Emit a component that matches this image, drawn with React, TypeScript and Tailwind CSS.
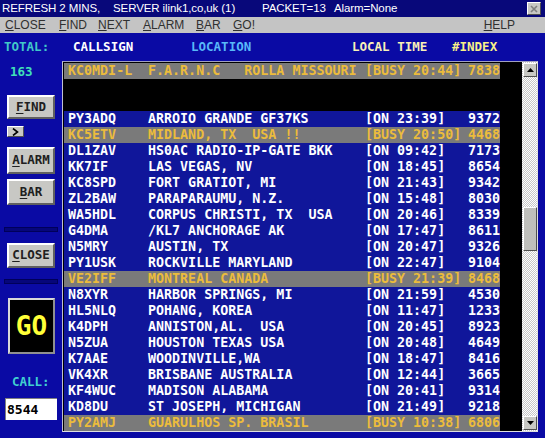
const rows: [string, string, string, string, string][] = [
  ["KC0MDI-L", "F.A.R.N.C   ROLLA MISSOURI", "[BUSY 20:44]", "7838", "busy"],
  ["", "", "", "", "empty"],
  ["", "", "", "", "empty"],
  ["PY3ADQ", "ARROIO GRANDE GF37KS", "[ON 23:39]", "9372", "on"],
  ["KC5ETV", "MIDLAND, TX  USA !!", "[BUSY 20:50]", "4468", "busy"],
  ["DL1ZAV", "HS0AC RADIO-IP-GATE BKK", "[ON 09:42]", "7173", "on"],
  ["KK7IF", "LAS VEGAS, NV", "[ON 18:45]", "8654", "on"],
  ["KC8SPD", "FORT GRATIOT, MI", "[ON 21:43]", "9342", "on"],
  ["ZL2BAW", "PARAPARAUMU, N.Z.", "[ON 15:48]", "8030", "on"],
  ["WA5HDL", "CORPUS CHRISTI, TX  USA", "[ON 20:46]", "8339", "on"],
  ["G4DMA", "/KL7 ANCHORAGE AK", "[ON 17:47]", "8611", "on"],
  ["N5MRY", "AUSTIN, TX", "[ON 20:47]", "9326", "on"],
  ["PY1USK", "ROCKVILLE MARYLAND", "[ON 22:47]", "9104", "on"],
  ["VE2IFF", "MONTREAL CANADA", "[BUSY 21:39]", "8468", "busy"],
  ["N8XYR", "HARBOR SPRINGS, MI", "[ON 21:59]", "4530", "on"],
  ["HL5NLQ", "POHANG, KOREA", "[ON 11:47]", "1233", "on"],
  ["K4DPH", "ANNISTON,AL.  USA", "[ON 20:45]", "8923", "on"],
  ["N5ZUA", "HOUSTON TEXAS USA", "[ON 20:48]", "4649", "on"],
  ["K7AAE", "WOODINVILLE,WA", "[ON 18:47]", "8416", "on"],
  ["VK4XR", "BRISBANE AUSTRALIA", "[ON 12:44]", "3665", "on"],
  ["KF4WUC", "MADISON ALABAMA", "[ON 20:41]", "9314", "on"],
  ["KD8DU", "ST JOSEPH, MICHIGAN", "[ON 21:49]", "9218", "on"],
  ["PY2AMJ", "GUARULHOS SP. BRASIL", "[BUSY 10:38]", "6806", "busy"],
];

const mono = "font-['DejaVu_Sans_Mono',monospace] font-bold";
const sans = "font-['Liberation_Sans',Arial,sans-serif]";

const Btn = (props: { first: string; rest: string; h: string; mt: string }) => (
  <div
    className={`ml-[7px] flex w-[48px] items-center justify-center border-t-2 border-l-2 border-t-white border-l-white border-r-2 border-b-2 border-r-[#606060] border-b-[#606060] bg-[#c8c8c4] text-[12.5px] text-[#202020] ${mono} ${props.h} ${props.mt}`}
  >
    <span className="underline underline-offset-2">{props.first}</span>
    {props.rest}
  </div>
);

const Groove = (props: { mt: string }) => (
  <div className={`ml-[4px] h-[5px] w-[54px] border border-[#00005a] bg-[#06067a] ${props.mt}`} />
);

const Arrow = (props: { up?: boolean }) => (
  <div className="flex h-[14px] w-[14px] items-center justify-center border-t border-l border-t-white border-l-white border-r border-b border-r-[#505050] border-b-[#505050] bg-[#c8c8c4]">
    <svg width="7" height="4" viewBox="0 0 7 4">
      {props.up ? <path d="M3.5 0 L7 4 L0 4 Z" fill="#000" /> : <path d="M0 0 L7 0 L3.5 4 Z" fill="#000" />}
    </svg>
  </div>
);

export default function App() {
  return (
    <div className="flex h-[438px] w-[545px] flex-col overflow-hidden bg-[#0a0aa4]">
      {/* title bar */}
      <div className={`flex h-[17px] items-center bg-[#08087a] pl-[2px] text-[11.5px] tracking-[-0.1px] text-white ${sans}`}>
        <span className="w-[111px] whitespace-pre">REFRESH 2 MINS,</span>
        <span className="w-[149px] whitespace-pre">SERVER ilink1,co,uk (1)</span>
        <span className="w-[72px] whitespace-pre">PACKET=13</span>
        <span className="whitespace-pre">Alarm=None</span>
        <div className="ml-auto mr-[4px] flex h-[13px] w-[14px] items-center justify-center border-t border-l border-t-white border-l-white border-r border-b border-r-[#505050] border-b-[#505050] bg-[#c8c8c4]">
          <svg width="8" height="8" viewBox="0 0 8 8">
            <path d="M1 1 L7 7 M7 1 L1 7" stroke="#808080" strokeWidth="1.6" />
          </svg>
        </div>
      </div>
      {/* menu */}
      <div className={`flex h-[16px] items-center bg-[#c4c4c4] pl-[5px] text-[12px] text-[#303030] ${sans}`}>
        {[
          ["C", "LOSE", "w-[54px]"],
          ["F", "IND", "w-[39px]"],
          ["N", "EXT", "w-[45px]"],
          ["A", "LARM", "w-[53px]"],
          ["B", "AR", "w-[37px]"],
          ["G", "O!", "w-[40px]"],
        ].map(([f, r, w]) => (
          <span key={f + r} className={w}>
            <span className="underline underline-offset-1">{f}</span>
            {r}
          </span>
        ))}
        <span className="ml-auto mr-[30px]">
          <span className="underline underline-offset-1">H</span>ELP
        </span>
      </div>
      {/* header */}
      <div className={`flex h-[28px] items-center pt-[1px] text-[12.5px] ${mono}`}>
        <span className="ml-[4px] w-[69px] text-[#40c8c8]">TOTAL:</span>
        <span className="w-[118px] text-white">CALLSIGN</span>
        <span className="w-[161px] text-[#58b8f8]">LOCATION</span>
        <span className="w-[100px] text-[#f8f0b8]">LOCAL TIME</span>
        <span className="text-[#f8f088]">#INDEX</span>
      </div>
      {/* body */}
      <div className="flex flex-1 flex-row">
        {/* left panel */}
        <div className="flex w-[62px] flex-col">
          <div className={`ml-[10px] mt-[3px] h-[16px] text-[12.5px] leading-[16px] text-[#40e0b8] ${mono}`}>163</div>
          <Btn first="F" rest="IND" h="h-[24px]" mt="mt-[15px]" />
          <div className="ml-[7px] mt-[7px] flex h-[11px] w-[17px] items-center justify-center border-t border-l border-t-white border-l-white border-r border-b border-r-[#505050] border-b-[#505050] bg-[#c8c8c4]">
            <svg width="7" height="8" viewBox="0 0 7 8">
              <path d="M1 0.5 L5.5 4 L1 7.5" stroke="#000" strokeWidth="1.6" fill="none" />
            </svg>
          </div>
          <Btn first="A" rest="LARM" h="h-[27px]" mt="mt-[10px]" />
          <Btn first="B" rest="AR" h="h-[26px]" mt="mt-[5px]" />
          <Groove mt="mt-[22px]" />
          <Btn first="C" rest="LOSE" h="h-[25px]" mt="mt-[11px]" />
          <Groove mt="mt-[11px]" />
          <div className="ml-[8px] mt-[14px] flex h-[56px] w-[47px] items-center justify-center border-2 border-t-[#d8d8d8] border-l-[#d8d8d8] border-r-[#909090] border-b-[#909090] bg-black">
            <span className={`text-[26px] leading-none text-[#ffff38] ${mono}`}>GO</span>
          </div>
          <div className={`ml-[12px] mt-[22px] h-[12px] text-[12.5px] leading-[12px] text-[#40d0d0] ${mono}`}>CALL:</div>
          <div className={`ml-[5px] mt-[10px] flex h-[22px] w-[52px] items-center border-t border-l border-t-[#808080] border-l-[#808080] bg-white pl-[1px] text-[13px] text-black ${mono}`}>
            8544
          </div>
        </div>
        {/* list panel */}
        <div className="flex h-[371px] w-[476px] border border-t-[#a0a0c0] border-l-[#c0c0d0] border-r-[#e0e0e0] border-b-[#e0e0e0] bg-black">
          <div className="flex w-[459px] flex-col pl-[1px] pt-[1px]">
            {rows.map((r, i) => (
              <div
                key={i}
                className={`flex h-[16px] w-[436px] items-center whitespace-pre pl-[4px] text-[13.33px] leading-[16px] ${mono} ${
                  r[4] === "busy"
                    ? "bg-[#7a7a7a] text-[#ecbc3c]"
                    : r[4] === "on"
                    ? "bg-[#10169a] text-white"
                    : "bg-black"
                }`}
              >
                <span className="w-[80px]">{r[0]}</span>
                <span className="w-[217px]">{r[1]}</span>
                <span className="w-[103px]">{r[2]}</span>
                <span>{r[3]}</span>
              </div>
            ))}
          </div>
          {/* scrollbar */}
          <div className="flex w-[15px] flex-col bg-[repeating-conic-gradient(#c8c8c8_0%_25%,#ffffff_0%_50%)] bg-[length:2px_2px] pl-[1px] pt-[1px]">
            <Arrow up />
            <div className="mt-[130px] h-[44px] w-[14px] border-t border-l border-t-white border-l-white border-r border-b border-r-[#505050] border-b-[#505050] bg-[#c0c0bc]" />
            <div className="mt-auto mb-[1px]">
              <Arrow />
            </div>
          </div>
        </div>
      </div>
    </div>
  );
}
